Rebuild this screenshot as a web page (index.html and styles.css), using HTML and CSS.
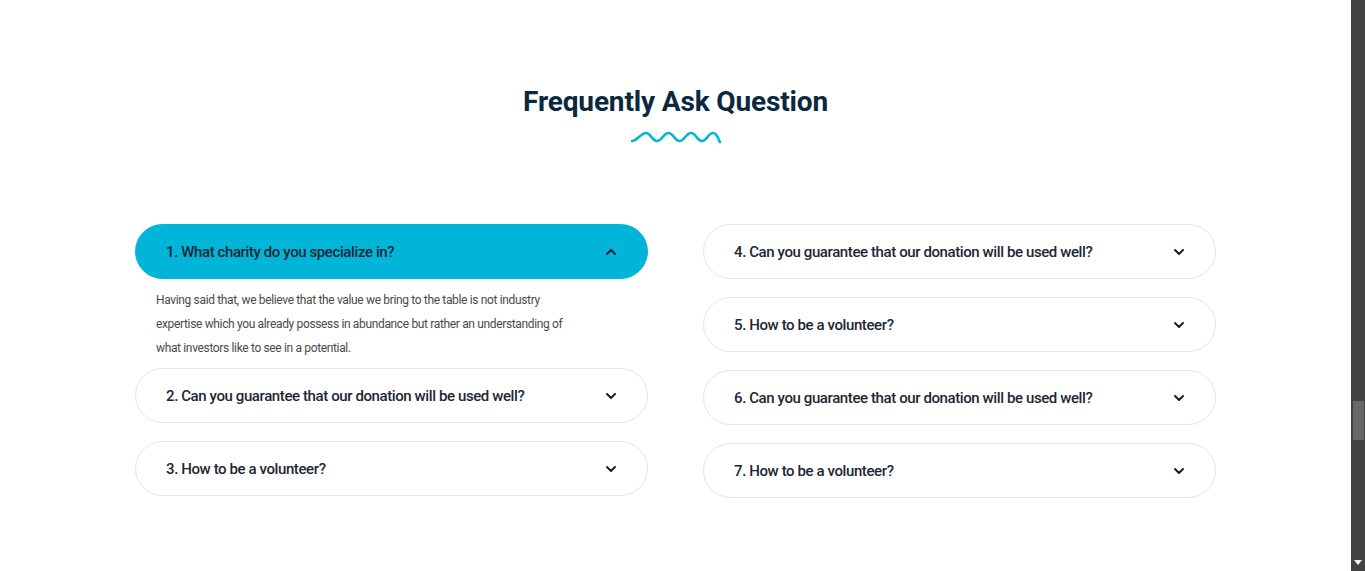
FILE: index.html
```html
<!DOCTYPE html>
<html lang="en">
<head>
    <meta charset="UTF-8">
    <meta name="viewport" content="width=device-width, initial-scale=1.0">
    <title>FAQ</title>
    <link rel="stylesheet" href="styles.css">
</head>
<body>
    <main class="page">
        <section class="faq">
            <div class="faq-head">
                <h2>Frequently Ask Question</h2>
                <svg class="wave" width="90" height="14" viewBox="0 0 90 14">
                    <path d="M1 11 C6 11 10 3 15 3 S21 11 26 11 S32.5 3 37.5 3 S43.5 11 48.5 11 S55 3 60 3 S66 11 71 11 S77 3 82 3 S87 10 89 12" fill="none" stroke="#00b5d8" stroke-width="2.6" stroke-linecap="round"/>
                </svg>
            </div>

            <div class="faq-grid">
                <div class="faq-col">
                    <div class="faq-item open">
                        <div class="faq-q">
                            <span>1. What charity do you specialize in?</span>
                            <svg class="chev" width="12" height="8" viewBox="0 0 12 8"><path d="M2 6 L6 2 L10 6" /></svg>
                        </div>
                        <p class="faq-a">Having said that, we believe that the value we bring to the table is not industry expertise which you already possess in abundance but rather an understanding of what investors like to see in a potential.</p>
                    </div>
                    <div class="faq-item">
                        <div class="faq-q">
                            <span>2. Can you guarantee that our donation will be used well?</span>
                            <svg class="chev" width="12" height="8" viewBox="0 0 12 8"><path d="M2 2 L6 6 L10 2" /></svg>
                        </div>
                    </div>
                    <div class="faq-item">
                        <div class="faq-q">
                            <span>3. How to be a volunteer?</span>
                            <svg class="chev" width="12" height="8" viewBox="0 0 12 8"><path d="M2 2 L6 6 L10 2" /></svg>
                        </div>
                    </div>
                </div>

                <div class="faq-col">
                    <div class="faq-item">
                        <div class="faq-q">
                            <span>4. Can you guarantee that our donation will be used well?</span>
                            <svg class="chev" width="12" height="8" viewBox="0 0 12 8"><path d="M2 2 L6 6 L10 2" /></svg>
                        </div>
                    </div>
                    <div class="faq-item">
                        <div class="faq-q">
                            <span>5. How to be a volunteer?</span>
                            <svg class="chev" width="12" height="8" viewBox="0 0 12 8"><path d="M2 2 L6 6 L10 2" /></svg>
                        </div>
                    </div>
                    <div class="faq-item">
                        <div class="faq-q">
                            <span>6. Can you guarantee that our donation will be used well?</span>
                            <svg class="chev" width="12" height="8" viewBox="0 0 12 8"><path d="M2 2 L6 6 L10 2" /></svg>
                        </div>
                    </div>
                    <div class="faq-item">
                        <div class="faq-q">
                            <span>7. How to be a volunteer?</span>
                            <svg class="chev" width="12" height="8" viewBox="0 0 12 8"><path d="M2 2 L6 6 L10 2" /></svg>
                        </div>
                    </div>
                </div>
            </div>
        </section>
    </main>

    <!-- browser scrollbar, drawn -->
    <aside class="scrollbar">
        <div class="thumb"></div>
        <div class="arrow"></div>
    </aside>
</body>
</html>
```

FILE: styles.css
```css
body {
    margin: 0;
    height: 571px;
    overflow: hidden;
    display: flex;
    background: #fff;
    font-family: Roboto, "Noto Sans", sans-serif;
    color: #1d2733;
}
.page {
    flex: 1;
}
.faq {
    padding: 84px 0 60px;
}
.faq-head {
    display: flex;
    flex-direction: column;
    align-items: center;
}
.faq-head h2 {
    margin: 0;
    font-size: 28px;
    line-height: 36px;
    font-weight: 700;
    letter-spacing: -0.15px;
    color: #0b2841;
}
.wave {
    display: block;
    margin-top: 10px;
}
.faq-grid {
    width: 1081px;
    margin: 80px auto 0;
    display: grid;
    grid-template-columns: 1fr 1fr;
    column-gap: 55px;
    align-items: start;
}
.faq-col {
    display: flex;
    flex-direction: column;
    gap: 18px;
}
.faq-q {
    height: 55px;
    box-sizing: border-box;
    border: 1px solid #e4e4e4;
    border-radius: 28px;
    padding: 0 30px;
    display: flex;
    align-items: center;
    justify-content: space-between;
    font-size: 15px;
    font-weight: 500;
    letter-spacing: -0.4px;
    color: #1d2733;
}
.open .faq-q {
    background: #00b5d8;
    border-color: #00b5d8;
}
.chev path {
    fill: none;
    stroke: #15202c;
    stroke-width: 2;
    stroke-linecap: round;
    stroke-linejoin: round;
}
.faq-a {
    margin: 0 0 -10px;
    padding: 9px 21px 0;
    max-width: 410px;
    font-size: 12px;
    line-height: 24px;
    letter-spacing: -0.35px;
    color: #4a4a4a;
}
.scrollbar {
    width: 14px;
    background: #424242;
    display: flex;
    flex-direction: column;
    align-items: center;
}
.thumb {
    width: 11px;
    height: 39px;
    margin-top: 401px;
    background: #686868;
}
.arrow {
    margin-top: auto;
    margin-bottom: 6px;
    width: 0;
    height: 0;
    border-left: 4px solid transparent;
    border-right: 4px solid transparent;
    border-top: 5px solid #f2f2f2;
}
```
